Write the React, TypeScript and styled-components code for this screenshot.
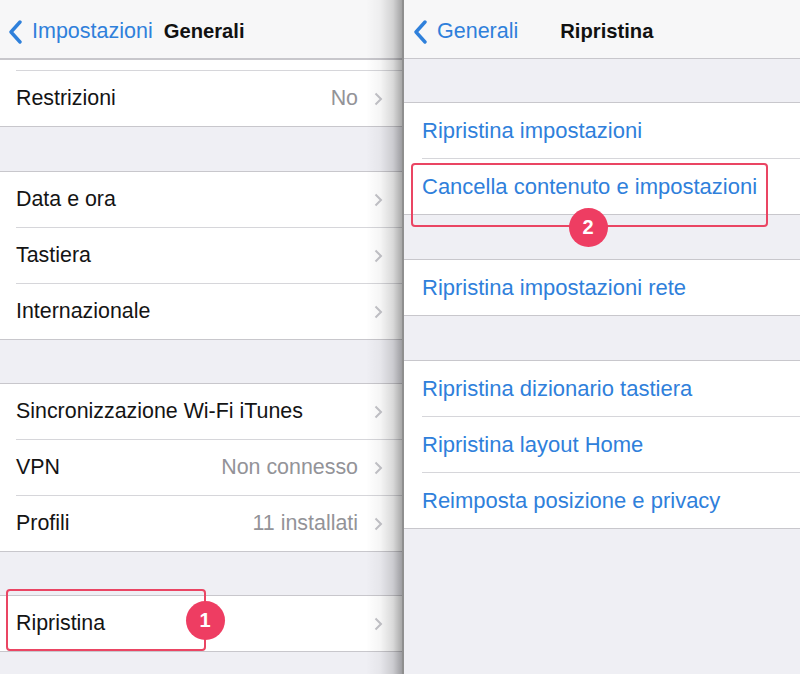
import React from "react";
import styled, { createGlobalStyle } from "styled-components";

const Global = createGlobalStyle`
  html, body { margin: 0; padding: 0; background: #efeff4; }
  body { font-family: "Liberation Sans", Arial, sans-serif; -webkit-font-smoothing: antialiased; }
  * { box-sizing: border-box; }
`;

const Screen = styled.div`
  display: flex;
  width: 800px;
  height: 674px;
  overflow: hidden;
  background: #efeff4;
`;

const Panel = styled.div<{ $w?: number; $fs: number }>`
  position: relative;
  flex: ${(p) => (p.$w ? `0 0 ${p.$w}px` : "1 1 auto")};
  display: flex;
  flex-direction: column;
  background: #efeff4;
  font-size: ${(p) => p.$fs}px;
  min-width: 0;
`;

const RightPanel = styled(Panel)`
  border-left: 2px solid #8f8f8f;
`;

const EdgeShadow = styled.div`
  position: absolute;
  top: 0;
  right: 0;
  width: 36px;
  height: 100%;
  pointer-events: none;
  background: linear-gradient(
    to right,
    rgba(0, 0, 0, 0) 0%,
    rgba(0, 0, 0, 0.04) 40%,
    rgba(0, 0, 0, 0.15) 75%,
    rgba(0, 0, 0, 0.34) 100%
  );
  z-index: 3;
`;

const NavBar = styled.div`
  height: 59px;
  flex: 0 0 59px;
  display: flex;
  align-items: center;
  background: #f7f7f8;
  border-bottom: 1px solid #c8c7cc;
  padding-top: 5px;
`;

const BackButton = styled.div<{ $pl: number }>`
  display: flex;
  align-items: center;
  color: #2f80db;
  font-size: 21.5px;
  padding-left: ${(p) => p.$pl}px;
  svg { margin-right: 10px; }
`;

const NavTitle = styled.div<{ $ml: number }>`
  margin-left: ${(p) => p.$ml}px;
  font-weight: 700;
  font-size: 20.2px;
  color: #111;
`;

const Group = styled.div<{ $mt: number }>`
  margin-top: ${(p) => p.$mt}px;
  background: #fff;
  border-top: 1px solid #c8c7cc;
  border-bottom: 1px solid #c8c7cc;
  display: flex;
  flex-direction: column;
`;

const Stub = styled.div<{ $inset: number }>`
  height: 11px;
  margin-left: ${(p) => p.$inset}px;
  border-bottom: 1px solid #d6d6da;
`;

const RowOuter = styled.div<{ $inset: number; $last?: boolean }>`
  position: relative;
  padding-left: ${(p) => p.$inset}px;
  &::after {
    content: "";
    display: ${(p) => (p.$last ? "none" : "block")};
    height: 1px;
    background: #d6d6da;
  }
`;

const RowInner = styled.div<{ $blue?: boolean }>`
  height: 55px;
  display: flex;
  align-items: center;
  padding-right: 19px;
  color: ${(p) => (p.$blue ? "#2f80db" : "#141414")};
`;

const Label = styled.span`
  flex: 1 1 auto;
  white-space: nowrap;
`;

const Value = styled.span`
  color: #939398;
  margin-right: 16px;
  white-space: nowrap;
`;

const Highlight = styled.div<{ $l: number; $t: number; $w: number; $h: number }>`
  position: absolute;
  left: ${(p) => p.$l}px;
  top: ${(p) => p.$t}px;
  width: ${(p) => p.$w}px;
  height: ${(p) => p.$h}px;
  border: 2px solid #ea4563;
  border-radius: 4px;
  z-index: 4;
  pointer-events: none;
`;

const Badge = styled.div<{ $l: number; $t: number }>`
  position: absolute;
  left: ${(p) => p.$l}px;
  top: ${(p) => p.$t}px;
  width: 39px;
  height: 39px;
  margin-left: -19.5px;
  margin-top: -19.5px;
  border-radius: 50%;
  background: #ee3d62;
  color: #fff;
  font-size: 20px;
  font-weight: 700;
  display: flex;
  align-items: center;
  justify-content: center;
  z-index: 5;
`;

const Chevron = () => (
  <svg width="9" height="14" viewBox="0 0 9 14">
    <polyline points="1.5,1.5 7,7 1.5,12.5" fill="none" stroke="#c4c4c9" strokeWidth="2" />
  </svg>
);

const BackChevron = () => (
  <svg width="14" height="24" viewBox="0 0 14 24">
    <polyline points="12,2 3,12 12,22" fill="none" stroke="#2f80db" strokeWidth="3.4" strokeLinecap="round" strokeLinejoin="round" />
  </svg>
);

type RowProps = {
  label: string;
  value?: string;
  chevron?: boolean;
  blue?: boolean;
  last?: boolean;
  inset: number;
  children?: React.ReactNode;
};

const Row = ({ label, value, chevron, blue, last, inset, children }: RowProps) => (
  <RowOuter $inset={inset} $last={last}>
    <RowInner $blue={blue}>
      <Label>{label}</Label>
      {value && <Value>{value}</Value>}
      {chevron && <Chevron />}
    </RowInner>
    {children}
  </RowOuter>
);

export default function App() {
  return (
    <>
      <Global />
      <Screen>
        <Panel $w={402} $fs={21.4}>
          <NavBar>
            <BackButton $pl={8}>
              <BackChevron />
              Impostazioni
            </BackButton>
            <NavTitle $ml={11}>Generali</NavTitle>
          </NavBar>
          <Group $mt={0}>
            <Stub $inset={16} />
            <Row inset={16} label="Restrizioni" value="No" chevron last />
          </Group>
          <Group $mt={44}>
            <Row inset={16} label="Data e ora" chevron />
            <Row inset={16} label="Tastiera" chevron />
            <Row inset={16} label="Internazionale" chevron last />
          </Group>
          <Group $mt={43}>
            <Row inset={16} label="Sincronizzazione Wi-Fi iTunes" chevron />
            <Row inset={16} label="VPN" value="Non connesso" chevron />
            <Row inset={16} label="Profili" value="11 installati" chevron last />
          </Group>
          <Group $mt={43}>
            <Row inset={16} label="Ripristina" chevron last>
              <Highlight $l={6} $t={-7} $w={200} $h={62} />
              <Badge $l={205} $t={24}>1</Badge>
            </Row>
          </Group>
          <EdgeShadow />
        </Panel>
        <RightPanel $fs={22}>
          <NavBar>
            <BackButton $pl={9}>
              <BackChevron />
              Generali
            </BackButton>
            <NavTitle $ml={42}>Ripristina</NavTitle>
          </NavBar>
          <Group $mt={43}>
            <Row inset={18} blue label="Ripristina impostazioni" />
            <Row inset={18} blue label="Cancella contenuto e impostazioni" last>
              <Highlight $l={7} $t={4} $w={357} $h={64} />
              <Badge $l={184} $t={68}>2</Badge>
            </Row>
          </Group>
          <Group $mt={44}>
            <Row inset={18} blue label="Ripristina impostazioni rete" last />
          </Group>
          <Group $mt={44}>
            <Row inset={18} blue label="Ripristina dizionario tastiera" />
            <Row inset={18} blue label="Ripristina layout Home" />
            <Row inset={18} blue label="Reimposta posizione e privacy" last />
          </Group>
        </RightPanel>
      </Screen>
    </>
  );
}
